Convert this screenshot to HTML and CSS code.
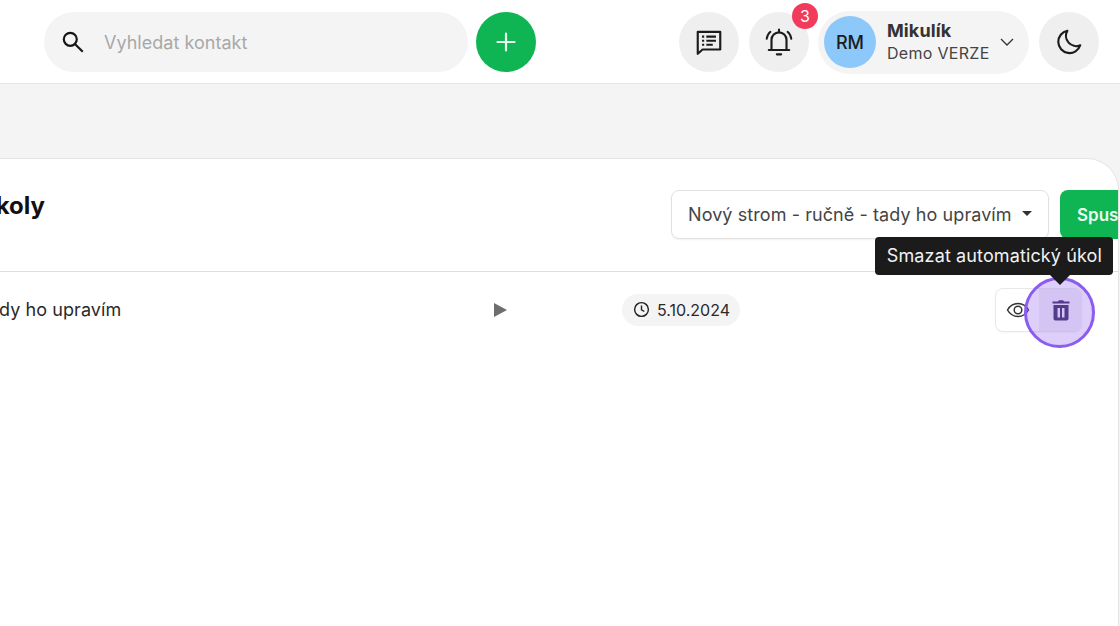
FILE: index.html
```html
<!DOCTYPE html>
<html lang="cs">
<head>
<meta charset="utf-8">
<title>Automatické úkoly</title>
<link rel="stylesheet" href="styles.css">
</head>
<body>
<div class="page">
  <header class="topbar">
    <div class="search">
      <svg class="search-icon" viewBox="0 0 24 24" width="26" height="26"><circle cx="9.5" cy="9.5" r="6" fill="none" stroke="#161616" stroke-width="2"/><path d="M14 14l7 7" stroke="#161616" stroke-width="2" fill="none"/></svg>
      <span class="search-text">Vyhledat kontakt</span>
    </div>
    <button class="add"><svg viewBox="0 0 24 24" width="24" height="24"><path d="M12 3.500v17M3.500 12h17" stroke="#eafbf0" stroke-width="2.200" stroke-linecap="round" fill="none"/></svg></button>
    <div class="top-right">
      <button class="round"><svg viewBox="0 0 28 28" width="30" height="30"><path d="M3.500 4.500h21v16.500H8l-4.500 4z" fill="none" stroke="#1c1c1c" stroke-width="2" stroke-linejoin="round"/><path d="M7.500 9h2M7.500 12.800h2M7.500 16.600h2M11.500 9h9M11.500 12.800h9M11.500 16.600h6" stroke="#1c1c1c" stroke-width="2" fill="none"/></svg></button>
      <div class="bell-wrap">
        <button class="round"><svg viewBox="0 0 28 28" width="30" height="30"><path d="M7 21.500v-9.500a7 7 0 0 1 14 0v9.500M4.500 21.500h19" fill="none" stroke="#1c1c1c" stroke-width="2" stroke-linecap="round"/><path d="M12 25.500h4M14 2.500v2" stroke="#1c1c1c" stroke-width="2" stroke-linecap="round" fill="none"/><path d="M2.500 11A10 10 0 0 1 6 4.500M25.500 11A10 10 0 0 0 22 4.500" stroke="#1c1c1c" stroke-width="1.800" stroke-linecap="round" fill="none"/></svg></button>
        <span class="badge">3</span>
      </div>
      <div class="profile">
        <span class="avatar">RM</span>
        <div class="who">
          <span class="who-name">Mikulík</span>
          <span class="who-sub">Demo VERZE</span>
        </div>
        <svg class="chev" viewBox="0 0 14 8" width="14" height="8"><path d="M1 1l6 6 6-6" fill="none" stroke="#333" stroke-width="1.300"/></svg>
      </div>
      <button class="round"><svg viewBox="0 0 28 28" width="30" height="30"><path d="M12.500 3.500a10.500 10.500 0 1 0 12 13.500A9.500 9.500 0 0 1 12.500 3.500z" fill="none" stroke="#1c1c1c" stroke-width="2" stroke-linejoin="round"/></svg></button>
    </div>
  </header>

  <main class="content">
    <section class="card">
      <div class="card-head">
        <h1 class="title">Automatické úkoly</h1>
        <div class="head-tools">
          <div class="select">
            <span>Nový strom - ručně - tady ho upravím</span>
            <i class="caret"></i>
          </div>
          <button class="run">Spustit</button>
        </div>
      </div>
      <div class="row">
        <div class="row-name">Nový strom - ručně - tady ho upravím</div>
        <div class="row-play"><i class="play"></i></div>
        <div class="row-date">
          <span class="chip">
            <svg viewBox="0 0 18 18" width="17" height="17"><circle cx="9" cy="9" r="7.300" fill="none" stroke="#222" stroke-width="1.500"/><path d="M9 4.800V9.300l3 1.800" fill="none" stroke="#222" stroke-width="1.500"/></svg>
            5.10.2024
          </span>
        </div>
        <div class="actions">
          <button class="act"><svg viewBox="0 0 24 24" width="24" height="24"><path d="M1.500 12C4 7.500 7.600 5.500 12 5.500S20 7.500 22.500 12C20 16.500 16.400 18.500 12 18.500S4 16.500 1.500 12z" fill="none" stroke="#333" stroke-width="1.500"/><circle cx="12" cy="12" r="3.800" fill="none" stroke="#333" stroke-width="1.500"/></svg></button>
          <button class="act act-hover"><svg viewBox="0 0 24 24" width="24" height="24"><path d="M4.500 7h15v13.500a2 2 0 0 1-2 2h-11a2 2 0 0 1-2-2z M8.500 10v9.500h2.500V10z M13 10v9.500h2.500V10z" fill="#3a2a60" fill-rule="evenodd"/><path d="M3.500 3.500h5.500l1-1.200h4l1 1.200h5.500v2h-17z" fill="#3a2a60"/></svg></button>
          <span class="spot"></span>
          <span class="tip">Smazat automatický úkol</span>
        </div>
      </div>
    </section>
  </main>
</div>
</body>
</html>
```

FILE: styles.css
```css
* { box-sizing: border-box; }
html, body { margin: 0; height: 100%; }
body { font-family: Inter, "Noto Sans", sans-serif; color: #1c1c1c; overflow: hidden; background: #fff; }
button { font: inherit; border: 0; padding: 0; }

.page { width: 1120px; height: 626px; display: flex; flex-direction: column; overflow: hidden; }

.topbar { flex: none; height: 84px; background: #fff; border-bottom: 1px solid #e6e6e6; display: flex; align-items: center; padding: 1px 21px 0 44px; gap: 8px; }
.search { width: 424px; height: 60px; border-radius: 30px; background: #f4f4f4; display: flex; align-items: center; padding-left: 16px; gap: 18px; }
.search-icon { flex: none; }
.search-text { font-size: 18px; letter-spacing: .03px; color: #a8a8a8; }
.add { width: 60px; height: 60px; border-radius: 50%; background: #0fb552; display: flex; align-items: center; justify-content: center; }
.top-right { margin-left: auto; display: flex; align-items: center; gap: 10px; }
.round { width: 60px; height: 60px; border-radius: 50%; background: #efefef; display: flex; align-items: center; justify-content: center; }
.bell-wrap { position: relative; height: 60px; margin-right: -1px; }
.badge { position: absolute; left: 43px; top: -9px; width: 26px; height: 26px; border-radius: 50%; background: #f23a5c; color: #fff; font-size: 16px; display: flex; align-items: center; justify-content: center; }
.profile { width: 211px; height: 63px; border-radius: 32px; background: #f4f4f4; display: flex; align-items: center; padding-left: 6px; }
.avatar { flex: none; width: 52px; height: 52px; border-radius: 50%; background: #8cc8fa; font-size: 18px; font-weight: 500; display: flex; align-items: center; justify-content: center; }
.who { margin-left: 11px; display: flex; flex-direction: column; line-height: 23px; margin-top: -1px; }
.who-name { font-size: 18px; font-weight: 700; letter-spacing: .1px; color: #333; }
.who-sub { font-size: 16px; font-weight: 400; letter-spacing: .3px; color: #444; }
.chev { margin-left: 10px; }

.content { flex: 1; min-height: 0; background: #f4f4f4; padding-top: 74px; }
.card { width: 1519px; height: 600px; margin-left: -400px; background: #fff; border: 1px solid #e4e4e4; border-radius: 0 32px 0 0; overflow: hidden; }
.card-head { height: 113px; border-bottom: 1px solid #dedede; display: flex; align-items: flex-start; justify-content: space-between; padding: 30px 0 0 225px; }
.title { margin: 0; font-size: 24px; line-height: 34px; font-weight: 700; color: #111; }
.head-tools { display: flex; gap: 11px; margin-right: -40px; margin-top: 1px; }
.select { width: 378px; height: 49px; border: 1px solid #e2e2e2; border-radius: 8px; background: #fff; box-shadow: 0 1px 2px rgba(0,0,0,.06); display: flex; align-items: center; justify-content: space-between; padding: 0 16px; font-size: 18px; letter-spacing: .08px; color: #444; }
.caret { width: 0; height: 0; border-left: 5.500px solid transparent; border-right: 5.500px solid transparent; border-top: 5.500px solid #333; margin-top: -2px; }
.run { width: 98px; height: 49px; border-radius: 8px; background: #0fb552; color: #eafbf0; font-size: 17px; font-weight: 600; text-align: left; padding-left: 17px; }

.row { display: grid; grid-template-columns: 893px 128px 1fr auto; align-items: center; height: 75px; padding-right: 36px; }
.row-name { padding-left: 197px; font-size: 18px; letter-spacing: .07px; color: #2a2a2a; }
.play { display: block; width: 0; height: 0; border-left: 13px solid #6e6e6e; border-top: 7.500px solid transparent; border-bottom: 7.500px solid transparent; }
.chip { display: inline-flex; align-items: center; gap: 7px; height: 32px; padding: 0 10px 0 11px; border-radius: 16px; background: #f4f4f4; font-size: 16px; font-weight: 400; color: #2a2a2a; }

.actions { position: relative; display: flex; width: 87px; height: 44px; margin-left: 1px; border: 1px solid #e8e8e8; border-radius: 8px; background: #fff; box-shadow: 0 1px 2px rgba(0,0,0,.04); }
.act { flex: none; width: 43px; height: 42px; background: none; display: flex; align-items: center; justify-content: center; }
.act-hover { background: #f1eff5; border-radius: 0 8px 8px 0; }
.spot { position: absolute; left: 28px; top: -12px; width: 71px; height: 71px; border-radius: 50%; border: 3px solid #8a5cf0; background: rgba(146, 96, 240, .3); }
.tip { position: absolute; right: -32px; top: -52px; height: 38px; padding: 0 11px 0 12px; display: flex; align-items: center; white-space: nowrap; background: #1b1b1b; color: #f2f2f2; border-radius: 4px; font-size: 18px; letter-spacing: .12px; }
.tip::after { content: ""; position: absolute; left: 175px; bottom: -10px; border-left: 10px solid transparent; border-right: 10px solid transparent; border-top: 10px solid #1b1b1b; }
```
